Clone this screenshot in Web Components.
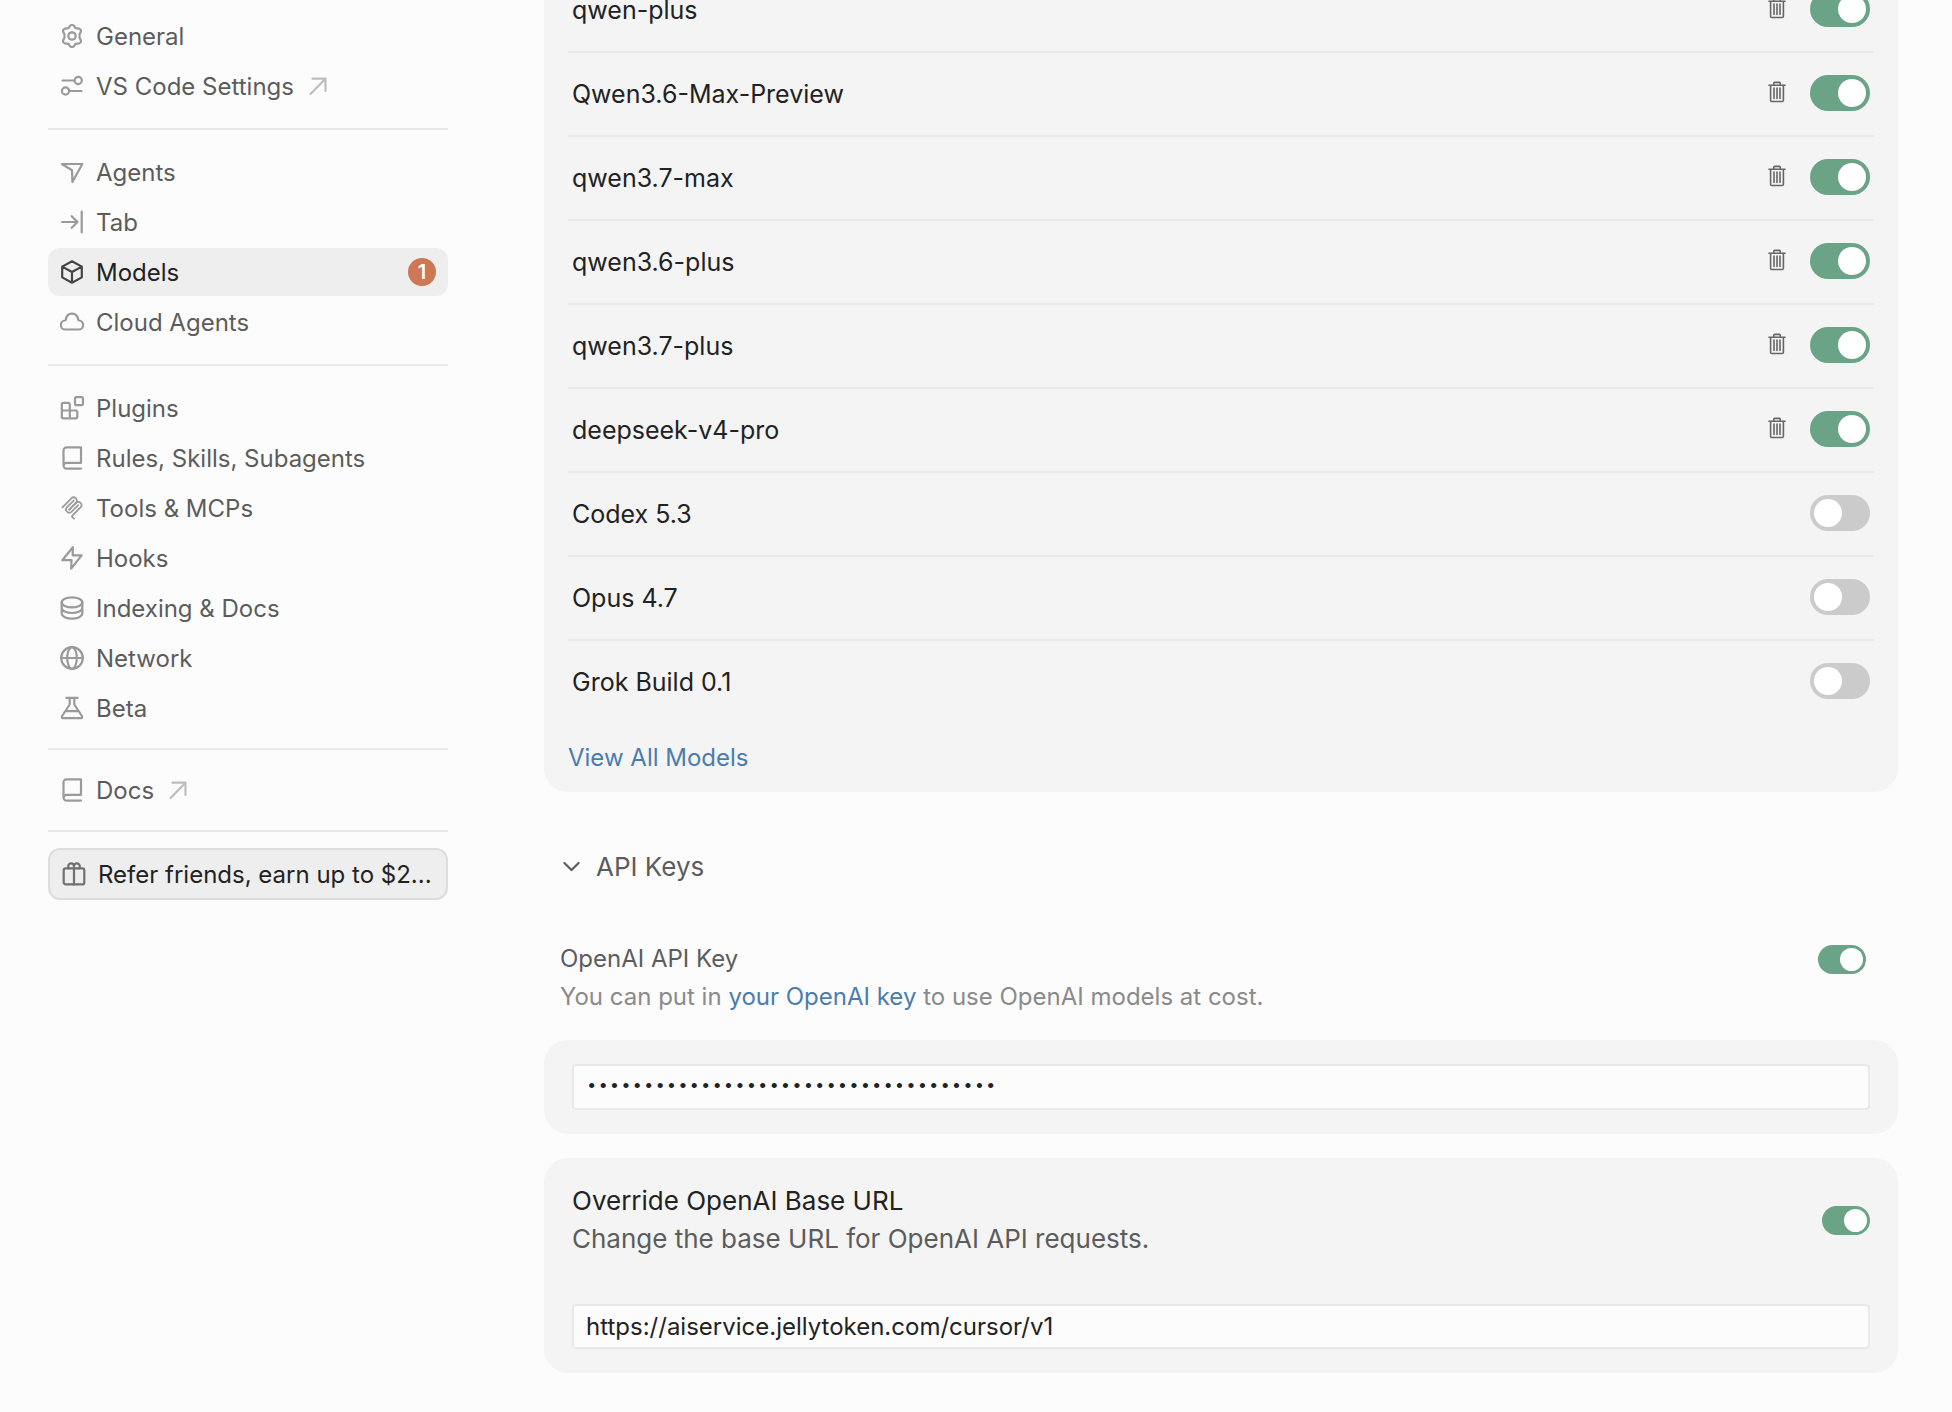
<!DOCTYPE html>
<html lang="en">
<head>
<meta charset="utf-8">
<meta name="viewport" content="width=device-width, initial-scale=1">
<title>Settings - Models</title>
<style>
    :root {
        --bg: #fcfcfc;
        --card: #f4f4f4;
        --active: #eeeeee;
        --line: #e9e9e9;
        --text: #222222;
        --text-secondary: #5c5c5c;
        --text-muted: #8a8a8a;
        --icon: #9a9a9a;
        --link: #4a7dae;
        --green: #6aa386;
        --off: #cbcbcb;
        --badge: #cd7755;
        --nav-size: 24px;
        --model-size: 25px;
        --heading-size: 26px;
    }
    html { height: 100%; overflow: hidden; }
    body {
        margin: 0;
        min-height: 100%;
        background: var(--bg);
        color: var(--text);
        font-family: Inter, "Liberation Sans", sans-serif;
        font-size: var(--nav-size);
    }
</style>
</head>
<body>
<settings-layout>
    <settings-nav slot="nav">
        <nav-item icon="gear">General</nav-item>
        <nav-item icon="sliders" external>VS Code Settings</nav-item>
        <nav-divider></nav-divider>
        <nav-item icon="agent">Agents</nav-item>
        <nav-item icon="tab">Tab</nav-item>
        <nav-item icon="cube" active badge="1">Models</nav-item>
        <nav-item icon="cloud">Cloud Agents</nav-item>
        <nav-divider></nav-divider>
        <nav-item icon="plugins">Plugins</nav-item>
        <nav-item icon="book">Rules, Skills, Subagents</nav-item>
        <nav-item icon="mcp">Tools &amp; MCPs</nav-item>
        <nav-item icon="bolt">Hooks</nav-item>
        <nav-item icon="database">Indexing &amp; Docs</nav-item>
        <nav-item icon="globe">Network</nav-item>
        <nav-item icon="flask">Beta</nav-item>
        <nav-divider compact></nav-divider>
        <nav-item icon="book" external>Docs</nav-item>
        <nav-divider compact></nav-divider>
        <refer-button>Refer friends, earn up to $2...</refer-button>
    </settings-nav>

    <model-list>
        <model-row custom checked>qwen-plus</model-row>
        <model-row custom checked>Qwen3.6-Max-Preview</model-row>
        <model-row custom checked>qwen3.7-max</model-row>
        <model-row custom checked>qwen3.6-plus</model-row>
        <model-row custom checked>qwen3.7-plus</model-row>
        <model-row custom checked>deepseek-v4-pro</model-row>
        <model-row>Codex 5.3</model-row>
        <model-row>Opus 4.7</model-row>
        <model-row last>Grok Build 0.1</model-row>
    </model-list>
    <api-keys></api-keys>
</settings-layout>

<script>
const ICONS = {
    gear: '<circle cx="12" cy="12" r="3.7"/><path d="M9.2 3.2c.5-1.3 1.5-2.2 2.8-2.2s2.3.9 2.8 2.2c.3.9 1.2 1.4 2.1 1.2 1.5-.3 2.8.1 3.6 1.2.7 1.2.4 2.6-.5 3.7-.7.8-.7 4.6 0 5.4.9 1.1 1.2 2.5.5 3.7-.8 1.1-2.1 1.5-3.6 1.2-.9-.2-1.8.3-2.1 1.2-.5 1.3-1.5 2.2-2.8 2.2s-2.3-.9-2.8-2.2c-.3-.9-1.2-1.4-2.1-1.2-1.5.3-2.8-.1-3.6-1.2-.7-1.2-.4-2.6.5-3.7.7-.8.7-4.6 0-5.4-.9-1.1-1.2-2.5-.5-3.7.8-1.1 2.1-1.5 3.6-1.2.9.2 1.8-.3 2.1-1.2z"/>',
    sliders: '<path d="M2.5 6.5H14M10 17h11.5"/><circle cx="18.2" cy="6.5" r="3.6"/><circle cx="5.5" cy="17" r="3.6"/>',
    agent: '<path d="M1.9 4h20.4L12.4 22 12 10.300z"/>',
    tab: '<path d="M21.7 1.500v21M2 12h15.500M11.700 6.200l5.800 5.800-5.800 5.800"/>',
    cube: '<path d="M12 1.300l9.800 5.300v10.800L12 22.700l-9.800-5.300V6.600zM2.200 6.600L12 12l9.800-5.400M12 12v10.700"/>',
    cloud: '<path d="M5.600 19.500a4.500 4.500 0 0 1-.5-9c.3-.1.5-.3.6-.6C6.300 6.200 8.700 3.700 12 3.700s5.700 2.500 6.300 6.200c.1.300.3.500.6.600a4.500 4.500 0 0 1-.5 9z"/>',
    plugins: '<rect x="15" y="1.200" width="8" height="8" rx="1.500"/><path d="M3.300 6.800h5a1.500 1.500 0 0 1 1.500 1.500v6.200h6a1.500 1.500 0 0 1 1.500 1.500v4.800a1.500 1.500 0 0 1-1.500 1.500H3.300a1.500 1.500 0 0 1-1.500-1.500V8.300a1.500 1.500 0 0 1 1.500-1.500zM1.800 14.500h8v7.800"/>',
    book: '<path d="M21 1.400H6.500a3 3 0 0 0-3 3v15.200a3 3 0 0 0 3 3H21M21 1.400v15.400H6.500a3 3 0 0 0-3 2.800"/>',
    mcp: '<g transform="scale(.1333)" stroke-width="13"><path d="M18 84.900l67.900-67.900a24 24 0 0 1 33.900 33.900L68.600 102.200"/><path d="M69.300 101.500l50.500-50.600a24 24 0 0 1 34 0l.3.400a24 24 0 0 1 0 33.900L92.700 146.600a8 8 0 0 0 0 11.300l12.600 12.600"/><path d="M102.900 33.900L52.600 84.100a24 24 0 0 0 34 34l50.200-50.200"/></g>',
    bolt: '<path d="M12.800 1.200L2.300 14.200h9.200l-.3 8.500L21.600 9.300h-8.900z"/>',
    database: '<ellipse cx="12" cy="6.400" rx="10.300" ry="5"/><path d="M1.700 6.400v11.200c0 2.800 4.600 5 10.300 5s10.300-2.200 10.300-5V6.400M1.700 12c0 2.800 4.600 5 10.300 5s10.300-2.200 10.300-5"/>',
    globe: '<circle cx="12" cy="12" r="10.800"/><ellipse cx="12" cy="12" rx="4.800" ry="10.800"/><path d="M1.200 12h21.600"/>',
    flask: '<path d="M6.500 1.900h11M9.700 1.900v6.600L2.100 20c-.7 1.100-.2 2.100 1 2.100h17.800c1.200 0 1.700-1 1-2.100L14.300 8.500V1.900M6 15.200h12"/>',
    gift: '<rect x="1.700" y="6.400" width="20.600" height="16" rx="2"/><path d="M12 6.400v16M12 6.400V4.300a2.900 2.900 0 1 0-5.800 0c0 .9.300 1.600.7 2.100M12 4.300a2.900 2.900 0 1 1 5.800 0c0 .9-.3 1.600-.7 2.100"/>',
    external: '<path d="M4.500 20L19.500 4.700M6.500 4.700h13V17"/>',
    chevron: '<path d="M4.400 8l7.100 7 7.100-7"/>',
    trash: '<path d="M4 5.200h16M8.800 5V3.200a.8.800 0 0 1 .8-.8h4.800a.8.800 0 0 1 .8.800V5M5.600 5.400v14.800a1.300 1.300 0 0 0 1.300 1.300h10.200a1.300 1.300 0 0 0 1.300-1.300V5.400M9 8v10.500M12 8v10.500M15 8v10.500"/>'
};

function icon(name, stroke = 2.2) {
    return `<svg class="icon" viewBox="0 0 24 24" width="24" height="24" fill="none" stroke="currentColor" stroke-width="${stroke}" stroke-linecap="round" stroke-linejoin="round" aria-hidden="true">${ICONS[name]}</svg>`;
}

// switch styles shared by the rows that hold one
const SWITCH_CSS = `
    input[type="checkbox"] {
        appearance: none;
        flex: none;
        box-sizing: border-box;
        width: 60px;
        height: 36px;
        margin: 0;
        padding: 4px;
        border-radius: 18px;
        background: var(--off);
        display: flex;
    }
    input[type="checkbox"]::before {
        content: '';
        height: 100%;
        aspect-ratio: 1;
        border-radius: 50%;
        background: #fff;
    }
    input[type="checkbox"]:checked {
        background: var(--green);
        justify-content: flex-end;
    }
    input[type="checkbox"].small {
        width: 48px;
        height: 29px;
        padding: 3px;
    }
`;

class SettingsLayout extends HTMLElement {
    constructor() {
        super();
        this.attachShadow({ mode: 'open' });
    }

    connectedCallback() {
        this.shadowRoot.innerHTML = `
            <style>
                :host {
                    display: grid;
                    grid-template-columns: 400px minmax(0, 1fr);
                    gap: 96px;
                    padding: 0 54px 0 48px;
                }
                main {
                    /* the content pane is scrolled part of the way into the list */
                    margin-top: -31px;
                }
            </style>
            <slot name="nav"></slot>
            <main><slot></slot></main>
        `;
    }
}

class SettingsNav extends HTMLElement {
    constructor() {
        super();
        this.attachShadow({ mode: 'open' });
    }

    connectedCallback() {
        this.shadowRoot.innerHTML = `
            <style>
                :host { display: block; padding-top: 12px; }
                nav { display: flex; flex-direction: column; gap: 2px; }
            </style>
            <nav><slot></slot></nav>
        `;
    }
}

class NavDivider extends HTMLElement {
    constructor() {
        super();
        this.attachShadow({ mode: 'open' });
    }

    connectedCallback() {
        this.shadowRoot.innerHTML = `
            <style>
                :host { display: block; height: 2px; margin: 16px 0; background: var(--line); }
                :host([compact]) { margin: 14px 0; }
            </style>
        `;
    }
}

class NavItem extends HTMLElement {
    constructor() {
        super();
        this.attachShadow({ mode: 'open' });
    }

    connectedCallback() {
        const badge = this.getAttribute('badge');
        this.shadowRoot.innerHTML = `
            <style>
                :host { display: block; }
                a {
                    display: flex;
                    align-items: center;
                    gap: 12px;
                    height: 48px;
                    padding: 0 12px;
                    border-radius: 12px;
                    color: var(--text-secondary);
                    text-decoration: none;
                    white-space: nowrap;
                }
                .icon { flex: none; color: var(--icon); }
                .external .icon { display: block; color: #bdbdbd; }
                :host([active]) a { background: var(--active); color: var(--text); }
                :host([active]) .icon { color: #444; }
                .badge {
                    margin-left: auto;
                    width: 28px;
                    border-radius: 14px;
                    background: var(--badge);
                    color: #fff;
                    font-size: 20px;
                    font-weight: 600;
                    line-height: 28px;
                    text-align: center;
                }
            </style>
            <a href="#">
                ${icon(this.getAttribute('icon'))}
                <span><slot></slot></span>
                ${this.hasAttribute('external') ? `<span class="external">${icon('external')}</span>` : ''}
                ${badge ? `<span class="badge">${badge}</span>` : ''}
            </a>
        `;
    }
}

class ReferButton extends HTMLElement {
    constructor() {
        super();
        this.attachShadow({ mode: 'open' });
    }

    connectedCallback() {
        this.shadowRoot.innerHTML = `
            <style>
                :host { display: block; }
                button {
                    display: flex;
                    align-items: center;
                    gap: 12px;
                    box-sizing: border-box;
                    width: 100%;
                    height: 52px;
                    padding: 0 12px;
                    border: 2px solid #dddddd;
                    border-radius: 12px;
                    background: var(--active);
                    color: var(--text);
                    font: inherit;
                    white-space: nowrap;
                }
                .icon { flex: none; color: #707070; }
            </style>
            <button type="button">${icon('gift')}<span><slot></slot></span></button>
        `;
    }
}

class ModelList extends HTMLElement {
    constructor() {
        super();
        this.attachShadow({ mode: 'open' });
    }

    connectedCallback() {
        this.shadowRoot.innerHTML = `
            <style>
                :host {
                    display: block;
                    padding: 0 24px 17px;
                    border-radius: 24px;
                    background: var(--card);
                }
                a {
                    display: inline-block;
                    margin-top: 18px;
                    color: var(--link);
                    line-height: 34px;
                    text-decoration: none;
                    vertical-align: top;
                }
            </style>
            <slot></slot>
            <a href="#">View All Models</a>
        `;
    }
}

class ModelRow extends HTMLElement {
    constructor() {
        super();
        this.attachShadow({ mode: 'open' });
    }

    connectedCallback() {
        const name = this.textContent;
        this.shadowRoot.innerHTML = `
            <style>
                ${SWITCH_CSS}
                :host {
                    display: flex;
                    align-items: flex-start;
                    gap: 21px;
                    padding: 22px 4px;
                    border-bottom: 2px solid var(--line);
                    font-size: var(--model-size);
                    line-height: 38px;
                }
                :host([last]) { border-bottom: 0; }
                label { flex: 1; }
                button {
                    display: flex;
                    align-items: center;
                    height: 34px;
                    padding: 0;
                    border: 0;
                    background: none;
                    color: #666;
                }
            </style>
            <label for="enabled"><slot></slot></label>
            ${this.hasAttribute('custom') ? `<button type="button" aria-label="Remove ${name}">${icon('trash', 1.6)}</button>` : ''}
            <input type="checkbox" role="switch" id="enabled" ${this.hasAttribute('checked') ? 'checked' : ''}>
        `;
    }
}

class ApiKeys extends HTMLElement {
    constructor() {
        super();
        this.attachShadow({ mode: 'open' });
    }

    connectedCallback() {
        this.shadowRoot.innerHTML = `
            <style>
                ${SWITCH_CSS}
                :host { display: block; margin-top: 58px; line-height: 38px; }
                .header {
                    display: flex;
                    align-items: center;
                    gap: 12px;
                    margin: 0 0 56px 16px;
                    padding: 0;
                    border: 0;
                    background: none;
                    color: var(--text-secondary);
                    font: inherit;
                    font-size: var(--heading-size);
                    line-height: 34px;
                }
                .row {
                    display: flex;
                    align-items: center;
                    justify-content: space-between;
                }
                .intro { padding: 0 32px 24px 16px; color: var(--text-secondary); }
                p { margin: 0; }
                .intro p { color: var(--text-muted); }
                a { color: var(--link); text-decoration: none; }
                .card {
                    padding: 24px 28px;
                    border-radius: 24px;
                    background: var(--card);
                }
                .card + .card { margin-top: 24px; }
                .override { margin-bottom: 46px; font-size: var(--heading-size); }
                .override p { color: var(--text-secondary); }
                .field {
                    display: block;
                    box-sizing: border-box;
                    width: 100%;
                    height: 46px;
                    padding: 0 12px;
                    border: 2px solid var(--line);
                    border-radius: 4px;
                    background: var(--bg);
                    color: var(--text);
                    font: inherit;
                }
                .field[type="password"] { font-family: "Liberation Mono", monospace; font-size: 19px; }
                .field[type="text"] { height: 45px; }
            </style>
            <button type="button" class="header" aria-expanded="true">${icon('chevron')}<span>API Keys</span></button>
            <div class="intro">
                <div class="row">
                    <label for="use-key">OpenAI API Key</label>
                    <input type="checkbox" role="switch" id="use-key" class="small" checked>
                </div>
                <p>You can put in <a href="#">your OpenAI key</a> to use OpenAI models at cost.</p>
            </div>
            <div class="card">
                <input type="password" class="field" aria-label="OpenAI API Key" value="${'0'.repeat(36)}">
            </div>
            <div class="card">
                <div class="row override">
                    <div>
                        <label for="use-url">Override OpenAI Base URL</label>
                        <p>Change the base URL for OpenAI API requests.</p>
                    </div>
                    <input type="checkbox" role="switch" id="use-url" class="small" checked>
                </div>
                <input type="text" class="field" aria-label="OpenAI Base URL" value="https://aiservice.jellytoken.com/cursor/v1">
            </div>
        `;
    }
}

customElements.define('settings-layout', SettingsLayout);
customElements.define('settings-nav', SettingsNav);
customElements.define('nav-divider', NavDivider);
customElements.define('nav-item', NavItem);
customElements.define('refer-button', ReferButton);
customElements.define('model-list', ModelList);
customElements.define('model-row', ModelRow);
customElements.define('api-keys', ApiKeys);
</script>
</body>
</html>
